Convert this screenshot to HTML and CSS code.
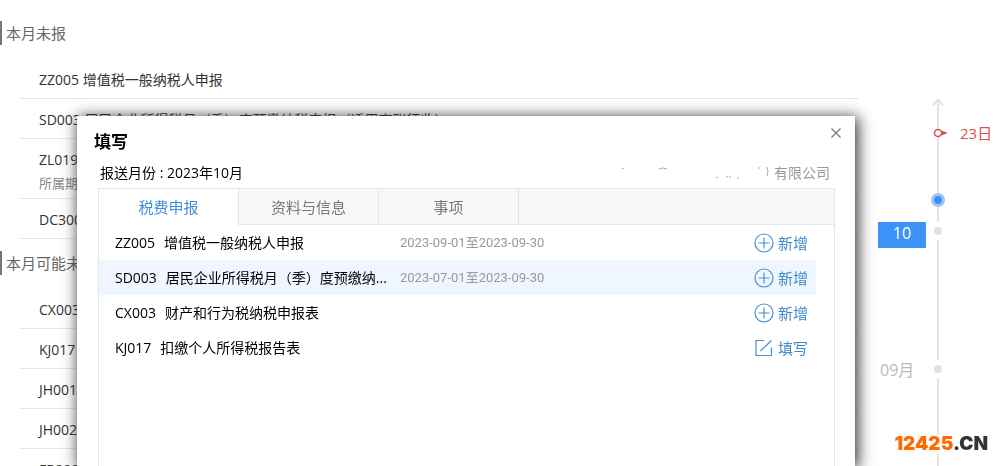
FILE: index.html
```html
<!DOCTYPE html>
<html lang="zh-CN">
  <head>
    <meta charset="UTF-8" />
    <meta name="viewport" content="width=device-width, initial-scale=1" />
    <title>填写</title>
    <link rel="stylesheet" href="styles.css">
  </head>
  <body>
    <div class="page">
      <main class="reports">
        <h2>本月未报</h2>
        <ul class="report-list">
          <li>ZZ005 增值税一般纳税人申报</li>
          <li>SD003 居民企业所得税月（季）度预缴纳税申报（适用查账征收）</li>
          <li>ZL019<small>所属期</small></li>
          <li>DC300</li>
        </ul>
        <h2>本月可能未报</h2>
        <ul class="report-list">
          <li>CX003</li>
          <li>KJ017</li>
          <li>JH001</li>
          <li>JH002</li>
          <li>FB200</li>
        </ul>
      </main>

      <aside class="timeline">
        <div class="period now">
          <div class="axis">
            <svg class="arrow" width="14" height="10" viewBox="0 0 14 10"><path d="M2 7.500L7 1.500L12 7.500M7 2V10" fill="none" stroke="#e4e4e4" stroke-width="2" /></svg>
            <div class="line"></div>
            <svg class="pin" width="20" height="12" viewBox="0 0 20 12"><path d="M9 3.500L15 5.500V6.500L9 8.500Z" fill="#d9534f" /><circle cx="6" cy="6" r="3.500" fill="#fff" stroke="#d9534f" stroke-width="1.500" /></svg>
            <span class="today"></span>
          </div>
          <span class="day">23日</span>
        </div>
        <div class="period">
          <span class="month active">10</span>
          <div class="axis"><span class="dot"></span><div class="line"></div></div>
        </div>
        <div class="period last">
          <span class="month">09月</span>
          <div class="axis"><span class="dot"></span><div class="line"></div></div>
        </div>
      </aside>
    </div>

    <section class="dialog" role="dialog" aria-labelledby="dialogTitle">
      <header>
        <h1 id="dialogTitle">填写</h1>
        <button class="close" aria-label="关闭">
          <svg width="10" height="10" viewBox="0 0 10 10"><path d="M.5 .5L9.500 9.500M9.500 .5L.5 9.500" stroke="#777" stroke-width="1.200" /></svg>
        </button>
      </header>
      <div class="info">
        <span>报送月份 : 2023年10月</span>
        <span class="company">
          <svg width="154" height="16" viewBox="0 0 154 16" fill="none" stroke="#aaa"><path d="M2 4l2-1M39 4l4-1l4 1M96 13l2-1M106 13l2-2M109 11l2 2M117 13h2M138 3h2M147 2q2 4 0 9" /></svg>有限公司
        </span>
      </div>

      <div class="panel">
        <nav class="tabs">
          <button class="active">税费申报</button>
          <button>资料与信息</button>
          <button>事项</button>
        </nav>
        <table class="forms">
          <tr>
            <td class="name"><span>ZZ005</span>增值税一般纳税人申报</td>
            <td class="range">2023-09-01至2023-09-30</td>
            <td class="action"><button><svg width="20" height="20" viewBox="0 0 20 20"><circle cx="10" cy="10" r="9" /><path d="M10 4.500V15.500M4.500 10H15.500" /></svg>新增</button></td>
          </tr>
          <tr class="selected">
            <td class="name"><span>SD003</span>居民企业所得税月（季）度预缴纳...</td>
            <td class="range">2023-07-01至2023-09-30</td>
            <td class="action"><button><svg width="20" height="20" viewBox="0 0 20 20"><circle cx="10" cy="10" r="9" /><path d="M10 4.500V15.500M4.500 10H15.500" /></svg>新增</button></td>
          </tr>
          <tr>
            <td class="name"><span>CX003</span>财产和行为税纳税申报表</td>
            <td class="range"></td>
            <td class="action"><button><svg width="20" height="20" viewBox="0 0 20 20"><circle cx="10" cy="10" r="9" /><path d="M10 4.500V15.500M4.500 10H15.500" /></svg>新增</button></td>
          </tr>
          <tr>
            <td class="name"><span>KJ017</span>扣缴个人所得税报告表</td>
            <td class="range"></td>
            <td class="action"><button><svg width="20" height="20" viewBox="0 0 20 20"><path d="M10 2.500H2V17.500H17.500V9.500M6.500 13L17.500 2.500" /></svg>填写</button></td>
          </tr>
        </table>
      </div>
    </section>

    <div class="site-mark"><b>12425</b>.CN</div>
  </body>
</html>
```

FILE: styles.css
```css
* {
  margin: 0;
  padding: 0;
  box-sizing: border-box;
}
body {
  height: 100vh;
  overflow: hidden;
  background: #fff;
  color: #333;
  font-family: "Open Sans", "Noto Sans CJK SC", sans-serif;
  font-size: 14px;
  line-height: 20px;
}
ul {
  list-style: none;
}
button {
  border: none;
  background: none;
  font: inherit;
  color: inherit;
  cursor: pointer;
}

/* Page behind the dialog */
.page {
  display: flex;
  height: 100%;
}
.reports {
  flex: 1;
  padding-top: 9px;
}
.reports h2 {
  margin: 12px 0 14px;
  padding-left: 4px;
  border-left: 2px solid #777;
  font-size: 15px;
  font-weight: normal;
  line-height: 24px;
  color: #666;
}
.report-list {
  margin-left: 20px;
}
.report-list li {
  padding: 11px 19px 8px;
  border-bottom: 1px solid #e6e6e6;
}
.report-list small {
  display: block;
  padding-top: 6px;
  font-size: 13px;
  line-height: 14px;
  color: #888;
}

/* Timeline */
.timeline {
  display: flex;
  flex-direction: column;
  width: 143px;
  padding-top: 98px;
}
.period {
  display: grid;
  grid-template-columns: 68px 24px 1fr;
  height: 138px;
}
.period.now {
  height: 124px;
}
.period.last {
  flex: 1;
}
.axis {
  grid-column: 2;
  grid-row: 1;
  position: relative;
  display: flex;
  flex-direction: column;
  align-items: center;
}
.line {
  flex: 1;
  width: 2px;
  background: #e4e4e4;
}
.dot {
  width: 8px;
  height: 8px;
  margin: 5px 0;
  border-radius: 50%;
  background: #e0e0e0;
}
.pin {
  position: absolute;
  top: 29px;
  left: 6px;
}
.today {
  position: absolute;
  top: 95px;
  left: 5px;
  width: 14px;
  height: 14px;
  border: 3px solid #a3c4f7;
  border-radius: 50%;
  background: #3b93f8;
}
.day {
  grid-column: 3;
  padding: 25px 0 0 10px;
  font-size: 15px;
  color: #d9534f;
}
.month {
  padding-left: 22px;
  font-size: 16px;
  color: #bbb;
}
.month.active {
  width: 48px;
  height: 26px;
  margin-left: 20px;
  padding: 0;
  background: #3b93f8;
  color: #fff;
  line-height: 22px;
  text-align: center;
}

/* Dialog */
.dialog {
  position: fixed;
  top: 116px;
  right: 146px;
  bottom: 0;
  left: 77px;
  display: flex;
  flex-direction: column;
  padding: 0 20px 0 21px;
  background: #fff;
  box-shadow: 2px 2px 14px 1px #333;
  color: #000;
}
.dialog header {
  display: flex;
  justify-content: space-between;
  align-items: flex-start;
  height: 46px;
  margin: 0 -8px 0 -4px;
}
.dialog h1 {
  padding-top: 14px;
  font-size: 17px;
  line-height: 24px;
}
.close {
  padding: 12px 2px;
  line-height: 0;
}
.info {
  display: flex;
  justify-content: space-between;
  padding: 1px 5px 5px 2px;
}
.company {
  display: flex;
  align-items: center;
  color: #999;
}
.panel {
  flex: 1;
  border: 1px solid #e6e6e6;
  border-bottom: none;
}
.tabs {
  display: flex;
  height: 36px;
  border-bottom: 1px solid #e6e6e6;
  background: #f8f8f8;
}
.tabs button {
  width: 140px;
  border-right: 1px solid #e6e6e6;
  font-size: 15px;
  color: #777;
}
.tabs .active {
  height: 36px;
  background: #fff;
  color: #3b8fe0;
}
.forms {
  width: calc(100% - 18px);
  border-collapse: collapse;
  table-layout: fixed;
}
.forms td {
  height: 35px;
  white-space: nowrap;
}
.forms .selected {
  background: #eff6ff;
}
.forms .name {
  width: 301px;
  padding-left: 16px;
}
.name span {
  margin-right: 9px;
}
.forms .range {
  font-family: Roboto, "Noto Sans CJK SC", sans-serif;
  font-size: 13px;
  color: #999;
}
.forms .action {
  width: 90px;
  padding-right: 8px;
}
.action button {
  display: flex;
  align-items: center;
  gap: 4px;
  margin-left: auto;
  font-size: 15px;
  color: #4089cc;
}
.action svg {
  fill: none;
  stroke: #4a90d2;
  stroke-width: 1.2;
}

/* Site mark */
.site-mark {
  position: fixed;
  right: 13px;
  bottom: 13px;
  background: #fff;
  font-family: Inter, sans-serif;
  font-size: 19px;
  font-weight: 900;
  line-height: 18px;
  color: #333;
}
.site-mark b {
  font-weight: 900;
  color: #ff6a00;
}
```
